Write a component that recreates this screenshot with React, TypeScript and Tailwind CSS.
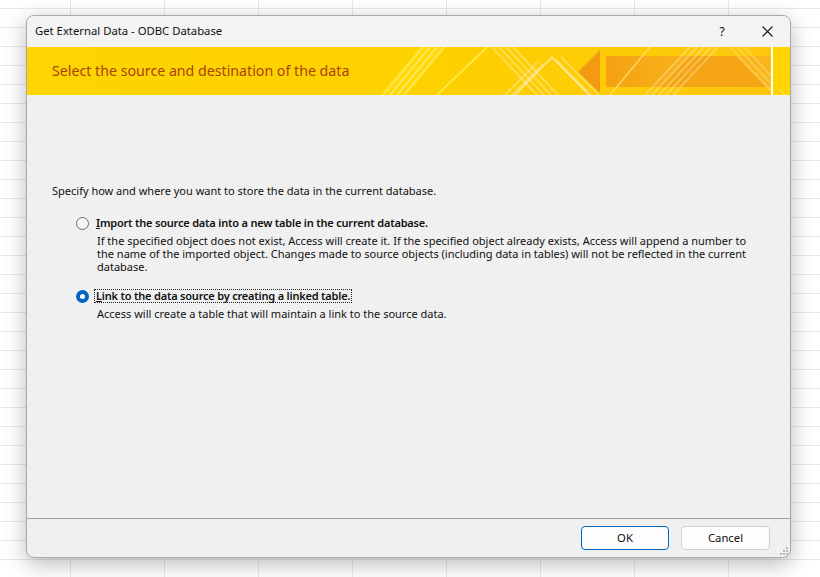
import React from "react";

const FONT = "font-['Noto_Sans','Open_Sans','Liberation_Sans',sans-serif]";

function BannerArt() {
    return (
        <svg className="absolute inset-0" width="763" height="48" viewBox="0 0 763 48">
            <defs>
                <linearGradient id="base" x1="0" y1="0" x2="1" y2="0">
                    <stop offset="0" stopColor="#fed500" />
                    <stop offset="0.5" stopColor="#fed100" />
                    <stop offset="1" stopColor="#fcc60c" />
                </linearGradient>
                <linearGradient id="shaft" x1="0" y1="0" x2="1" y2="0">
                    <stop offset="0" stopColor="#f5a114" />
                    <stop offset="0.4" stopColor="#f8b018" />
                    <stop offset="1" stopColor="#f9b81a" />
                </linearGradient>
            </defs>
            <rect width="763" height="48" fill="url(#base)" />
            {/* bright yellow band */}
            <polygon points="352,48 392,0 420,0 380,48" fill="#ffe000" opacity="0.55" />
            {/* left "/" bundle */}
            <g stroke="#fff" strokeOpacity="0.35" strokeWidth="2">
                <line x1="356" y1="48" x2="396" y2="0" />
                <line x1="363" y1="48" x2="403" y2="0" />
                <line x1="370" y1="48" x2="410" y2="0" />
                <line x1="377" y1="48" x2="417" y2="0" />
            </g>
            <line x1="410" y1="48" x2="460" y2="0" stroke="#ffe94a" strokeWidth="2" opacity="0.9" />
            {/* "\" bundle */}
            <g stroke="#fff" strokeOpacity="0.3" strokeWidth="2">
                <line x1="465" y1="0" x2="510" y2="48" />
                <line x1="472" y1="0" x2="517" y2="48" />
                <line x1="479" y1="0" x2="524" y2="48" />
                <line x1="486" y1="0" x2="531" y2="48" />
            </g>
            {/* orange arrow */}
            <polygon points="551,25 573,3 573,46" fill="#f39a13" />
            <polygon points="579,9 743,9 743,40 579,40" fill="url(#shaft)" />
            <polygon points="663,9 708,9 739,40 633,40" fill="#f5a514" />
            {/* triangle outline */}
            <polyline points="488,48 525,10 562,48" fill="none" stroke="#fff" strokeOpacity="0.6" strokeWidth="1.5" />
            <g stroke="#fff" strokeOpacity="0.3" strokeWidth="2">
                <line x1="478" y1="48" x2="512" y2="14" />
                <line x1="485" y1="48" x2="516" y2="17" />
                <line x1="530" y1="14" x2="564" y2="48" />
                <line x1="534" y1="10" x2="572" y2="48" />
            </g>
            {/* right "/" bundle */}
            <g stroke="#fff" strokeOpacity="0.28" strokeWidth="2">
                <line x1="663" y1="0" x2="618" y2="48" />
                <line x1="670" y1="0" x2="625" y2="48" />
                <line x1="677" y1="0" x2="632" y2="48" />
                <line x1="684" y1="0" x2="639" y2="48" />
                <line x1="691" y1="0" x2="646" y2="48" />
            </g>
            <line x1="623" y1="0" x2="583" y2="48" stroke="#ffe37a" strokeWidth="1.5" opacity="0.8" />
            {/* right "\" bundle */}
            <g stroke="#fff" strokeOpacity="0.22" strokeWidth="2">
                <line x1="703" y1="0" x2="748" y2="48" />
                <line x1="710" y1="0" x2="755" y2="48" />
                <line x1="717" y1="0" x2="762" y2="48" />
            </g>
            <rect x="744" y="0" width="19" height="48" fill="#ffd400" />
            <rect x="744" y="0" width="2" height="48" fill="#fff" />
            <line x1="752" y1="42" x2="758" y2="48" stroke="#fff" strokeOpacity="0.5" />
        </svg>
    );
}

function Radio({ checked }: { checked?: boolean }) {
    if (checked) {
        return (
            <span className="w-[13px] h-[13px] rounded-full bg-[#0067c0] flex items-center justify-center shrink-0">
                <span className="w-[5px] h-[5px] rounded-full bg-white" />
            </span>
        );
    }
    return <span className="w-[13px] h-[13px] rounded-full border border-[#6b6b6b] bg-[#f7f7f7] shrink-0" />;
}

export default function App() {
    return (
        <div
            className={`w-[820px] h-[577px] overflow-hidden bg-white pt-[15px] pl-[26px] ${FONT} text-[#111] [background-image:linear-gradient(to_right,#e8e8e8_1px,transparent_1px),linear-gradient(to_bottom,#e8e8e8_1px,transparent_1px)] [background-size:94px_19px] [background-position:70px_8px]`}
        >
            <div className="w-[765px] h-[543px] rounded-[8px] border border-[#a8a8a8] bg-[#f0f0f0] flex flex-col overflow-hidden relative shadow-[0_6px_22px_rgba(0,0,0,0.28)]">
                {/* Title bar */}
                <div className="h-[31px] bg-[#f3f3f3] flex items-center pl-[8px] shrink-0">
                    <span className="text-[11.3px]">Get External Data - ODBC Database</span>
                    <span className="ml-auto text-[12px] w-[20px] text-center mr-[30px]">?</span>
                    <svg className="mr-[17px]" width="11" height="11" viewBox="0 0 11 11">
                        <path d="M0.5 0.5 L10.5 10.5 M10.5 0.5 L0.5 10.5" stroke="#1a1a1a" strokeWidth="1.1" />
                    </svg>
                </div>

                {/* Banner */}
                <div className="h-[48px] relative shrink-0 flex items-center pl-[25px]">
                    <BannerArt />
                    <span className="relative text-[14.2px] text-[#a8420b]">Select the source and destination of the data</span>
                </div>

                {/* Body */}
                <div className="flex-1 pt-[89px] pl-[25px] text-[11px]">
                    <p className="leading-[14px]">Specify how and where you want to store the data in the current database.</p>

                    <div className="ml-[24px] mt-[18px]">
                        <div className="flex items-center gap-[6px] h-[14px]">
                            <Radio />
                            <span className="font-semibold px-[1px] leading-[14px] tracking-[-0.2px]">
                                <span className="underline">I</span>mport the source data into a new table in the current database.
                            </span>
                        </div>
                        <p className="ml-[21px] mt-[4px] leading-[13px] whitespace-nowrap">
                            If the specified object does not exist, Access will create it. If the specified object already exists, Access will append a number to
                            <br />
                            the name of the imported object. Changes made to source objects (including data in tables) will not be reflected in the current
                            <br />
                            database.
                        </p>

                        <div className="flex items-center gap-[5px] h-[14px] mt-[16px]">
                            <Radio checked />
                            <span className="font-semibold px-[1px] leading-[12px] tracking-[-0.2px] border border-dotted border-[#222]">
                                <span className="underline">L</span>ink to the data source by creating a linked table.
                            </span>
                        </div>
                        <p className="ml-[21px] mt-[4px] leading-[13px]">Access will create a table that will maintain a link to the source data.</p>
                    </div>
                </div>

                {/* Footer */}
                <div className="h-[39px] border-t border-[#a0a0a0] flex items-start justify-end gap-[12px] pt-[7px] pr-[20px] shrink-0 text-[11.3px]">
                    <button className="w-[88px] h-[24px] rounded-[4px] border border-[#0067c0] bg-[#fdfdfd]">OK</button>
                    <button className="w-[89px] h-[24px] rounded-[4px] border border-[#d0d0d0] bg-[#fdfdfd]">Cancel</button>
                </div>

                {/* Resize grip */}
                <svg className="absolute right-[2px] bottom-[2px]" width="8" height="8" viewBox="0 0 8 8">
                    <g fill="#b8b8b8">
                        <rect x="6" y="0" width="2" height="2" />
                        <rect x="3" y="3" width="2" height="2" />
                        <rect x="6" y="3" width="2" height="2" />
                        <rect x="0" y="6" width="2" height="2" />
                        <rect x="3" y="6" width="2" height="2" />
                        <rect x="6" y="6" width="2" height="2" />
                    </g>
                </svg>
            </div>
        </div>
    );
}
